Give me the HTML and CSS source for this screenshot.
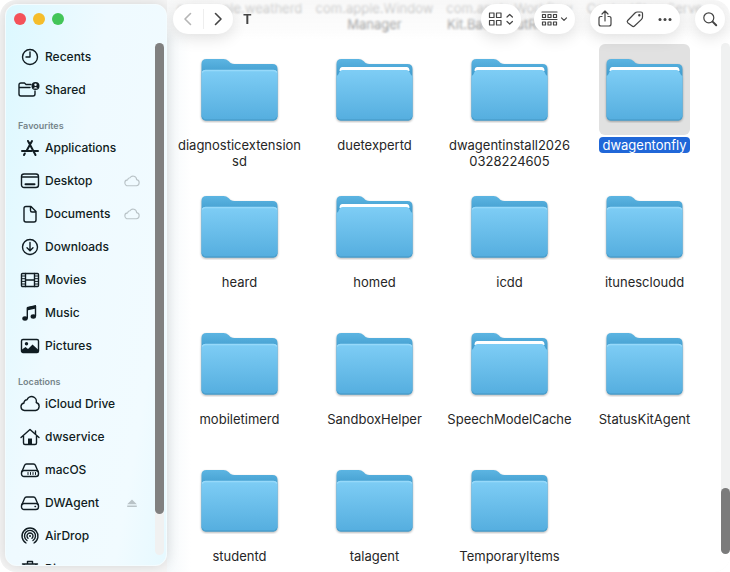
FILE: index.html
```
<!DOCTYPE html>
<html lang="en-GB">
<head>
<meta charset="utf-8">
<title>T</title>
<link rel="stylesheet" href="styles.css">
</head>
<body>
<svg class="defs" aria-hidden="true">
  <defs>
    <linearGradient id="back" x1="0" y1="0" x2="0" y2="1"><stop offset="0" stop-color="#5cb5e2"/><stop offset=".25" stop-color="#449fd0"/><stop offset="1" stop-color="#449fd0"/></linearGradient>
    <linearGradient id="front" x1="0" y1="0" x2="0" y2="1"><stop offset="0" stop-color="#7ecdf5"/><stop offset="1" stop-color="#55aedf"/></linearGradient>
    <symbol id="folder" viewBox="0 0 80 66">
      <path d="M2 7q0-5 5-5h17q3 0 5 2l2 2q2 1 4 1h38q5 0 5 5v48H2z" fill="url(#back)"/>
      <path d="M2 17q0-4 4-4h68q4 0 4 4v42q0 4-4 4H6q-4 0-4-4z" fill="url(#front)"/>
      <path d="M3 15q1-1.500 3-1.500h68q2 0 3 1.500" fill="none" stroke="#96d9fa"/>
      <path d="M3 61q1 2 3 2h68q2 0 3-2" fill="none" stroke="#4a9fcd"/>
    </symbol>
    <symbol id="folder-full" viewBox="0 0 80 66">
      <path d="M2 7q0-5 5-5h17q3 0 5 2l2 2q2 1 4 1h38q5 0 5 5v48H2z" fill="url(#back)"/>
      <path d="M5 14q0-4 3-4h64q3 0 3 4z" fill="#fff"/>
      <path d="M2 19q2-1 3-4 1-2 3-2h64q2 0 3 2 1 3 3 4v40q0 4-4 4H6q-4 0-4-4z" fill="url(#front)"/>
      <path d="M3 61q1 2 3 2h68q2 0 3-2" fill="none" stroke="#4a9fcd"/>
    </symbol>
    <symbol id="cloud" viewBox="0 0 20 20"><path d="M5 16a3.700 3.700 0 0 1-.5-7.400A3 3 0 0 1 7.500 6a4.500 4.500 0 0 1 8.300 2.300A3.900 3.900 0 0 1 15.500 16z"/></symbol>
  </defs>
</svg>
<div class="window">
  <aside class="sidebar">
    <div class="lights"><button class="light close" aria-label="Close"></button><button class="light minimise" aria-label="Minimise"></button><button class="light zoom" aria-label="Zoom"></button></div>
    <nav class="places">
      <ul>
        <li><a href="#"><svg viewBox="0 0 20 20"><circle cx="10" cy="10" r="7.500"/><path d="M10 5v5H6"/></svg><span>Recents</span></a></li>
        <li><a href="#"><svg class="wide" viewBox="0 0 22 20"><path d="M13 4.500H8L6.500 3H3Q1 3 1 5v9q0 2 2 2h12q2 0 2-2v-3M1 7.500H12"/><circle cx="17.500" cy="6" r="4" class="solid"/><circle cx="17.500" cy="4.800" r="1.200" class="light-fill"/><path d="M15.300 8.500q2.200-3 4.400 0z" class="light-fill"/></svg><span>Shared</span></a></li>
      </ul>
      <h2>Favourites</h2>
      <ul>
        <li><a href="#"><svg viewBox="0 0 20 20"><path class="thick" d="M8 3l7.500 14M12 3L9.500 7.500 6.500 13M2 13h9.500M14.500 13H18M4.800 15.500L4 17"/></svg><span>Applications</span></a></li>
        <li><a href="#"><svg viewBox="0 0 20 20"><rect x="1.500" y="3" width="17" height="13.500" rx="2.500"/><path d="M2 6h16"/><path class="thick" d="M5.500 13.300h9"/></svg><span>Desktop</span><svg class="status" viewBox="0 0 20 20"><use href="#cloud"/></svg></a></li>
        <li><a href="#"><svg viewBox="0 0 20 20"><path d="M6 2.500h5l5 5V16q0 2-2 2H6q-2 0-2-2V4.500q0-2 2-2zM10.500 3v3.500q0 1.500 1.500 1.500h4"/></svg><span>Documents</span><svg class="status" viewBox="0 0 20 20"><use href="#cloud"/></svg></a></li>
        <li><a href="#"><svg viewBox="0 0 20 20"><circle cx="10" cy="10" r="7.500"/><path d="M10 5.500v8M7 10.800l3 3 3-3"/></svg><span>Downloads</span></a></li>
        <li><a href="#"><svg viewBox="0 0 20 20"><rect x="1.500" y="3.500" width="17" height="13" rx="1"/><path d="M5.500 3.500v13M14.500 3.500v13M5.500 10h9"/><path class="fine" d="M2 6h3M2 8.700h3M2 11.400h3M2 14h3M15 6h3M15 8.700h3M15 11.400h3M15 14h3"/></svg><span>Movies</span></a></li>
        <li><a href="#"><svg viewBox="0 0 20 20"><path d="M7.300 15V5l8.200-1.800V13"/><path class="solid" d="M7 4l9-2v3.500l-9 2z"/><ellipse class="solid" cx="5" cy="15.500" rx="2.700" ry="2.200"/><ellipse class="solid" cx="13.300" cy="13.500" rx="2.700" ry="2.200"/></svg><span>Music</span></a></li>
        <li><a href="#"><svg viewBox="0 0 20 20"><rect x="1.500" y="3.500" width="17" height="13" rx="1.500"/><circle class="solid" cx="6.500" cy="7.800" r="1.700"/><path class="solid" d="M2 13.500l3.500-2.500 2.500 2 4.500-4.500 5.500 5v3H2z"/></svg><span>Pictures</span></a></li>
      </ul>
      <h2>Locations</h2>
      <ul>
        <li><a href="#"><svg viewBox="0 0 20 20"><path d="M4.500 16.500a3.800 3.800 0 0 1-.5-7.500 3 3 0 0 1 3-3.200 4.800 4.800 0 0 1 9.200 2.700A4.100 4.100 0 0 1 15.500 16.500z"/></svg><span>iCloud Drive</span></a></li>
        <li><a href="#"><svg viewBox="0 0 20 20"><path d="M1 10.500L10 2.500l9 8M15.500 7V4M3.500 9v7q0 1.500 1.500 1.500h10q1.500 0 1.500-1.500V9"/><path class="solid" d="M8 11.500h4v6H8z"/></svg><span>dwservice</span></a></li>
        <li><a href="#"><svg viewBox="0 0 20 20"><path d="M2 11.500l2.500-6q.6-1.500 2-1.500h7q1.400 0 2 1.500l2.500 6"/><rect x="1.500" y="10.500" width="17" height="6" rx="2.500"/><path class="fine" d="M8 12.500v2M10.500 12.500v2M13 12.500v2M15.500 12.500v2"/></svg><span>macOS</span></a></li>
        <li><a href="#"><svg viewBox="0 0 20 20"><path d="M2 11.500l2.500-6q.6-1.500 2-1.500h7q1.400 0 2 1.500l2.500 6"/><rect x="1.500" y="10.500" width="17" height="6" rx="2.500"/><path d="M15 13.500h.5"/></svg><span>DWAgent</span><svg class="status eject" viewBox="0 0 20 20"><path d="M10 5.500l6 6H4zM4 13h12v2H4z"/></svg></a></li>
        <li><a href="#"><svg viewBox="0 0 20 20"><path d="M6 17a8 8 0 1 1 8 0M7 14.500a5.500 5.500 0 1 1 6 0M8 12.200a3 3 0 1 1 4 0"/><circle class="solid" cx="10" cy="10" r="1"/></svg><span>AirDrop</span></a></li>
        <li><a href="#"><svg viewBox="0 0 20 20"><path d="M2.500 5h15M4 5l1 13h10l1-13M7.500 5V2.500h5V5M8 7v9M12 7v9M5 9h10"/></svg><span>Bin</span></a></li>
      </ul>
    </nav>
    <div class="scroll-track side-track"><div class="scroll-thumb"></div></div>
  </aside>
  <main class="content">
    <header class="toolbar">
      <div class="pill history"><button aria-label="Back" disabled><svg viewBox="0 0 20 20"><path d="M12.500 4.500L7 10l5.500 5.500"/></svg></button><button aria-label="Forward"><svg viewBox="0 0 20 20"><path d="M7.500 4.500L13 10l-5.500 5.500"/></svg></button></div>
      <h1>T</h1>
      <button class="pill view" aria-label="View as icons"><svg viewBox="0 0 28 20"><path d="M2.500 4h4.500v4.500H2.500zM9.500 4h4.500v4.500H9.500zM2.500 11.500h4.500V16H2.500zM9.500 11.500h4.500V16H9.500zM20 8l2.700-2.500L25.400 8M20 12.500l2.700 2.500 2.700-2.500"/></svg></button>
      <button class="pill group" aria-label="Group items"><svg viewBox="0 0 28 20"><path d="M1 3h15M1 10.500h15M1.500 5.500h3v3h-3zM7 5.500h3v3H7zM12.500 5.500h3v3h-3zM1.500 13h3v3h-3zM7 13h3v3H7zM12.500 13h3v3h-3zM20.500 8.800l2.500 2.500 2.500-2.500"/></svg></button>
      <div class="pill actions">
        <button aria-label="Share"><svg viewBox="0 0 20 20"><path d="M7 7.500H6q-2 0-2 2V15q0 2 2 2h8q2 0 2-2V9.500q0-2-2-2h-1M10 12V2.500M7 5l3-3 3 3"/></svg></button>
        <button aria-label="Edit tags"><svg viewBox="0 0 20 20"><path d="M2.700 11.500L10 4q1-1 2.500-1H16q1.500 0 1.500 1.500V8q0 1.300-1 2.300l-7 6.700q-1.200 1.200-2.400 0l-4.400-3.300q-1-1 0-2.200z"/><circle cx="14.300" cy="6.200" r=".6"/></svg></button>
        <button aria-label="More"><svg viewBox="0 0 20 20"><g class="solid"><circle cx="5" cy="10.500" r="1.500"/><circle cx="10" cy="10.500" r="1.500"/><circle cx="15" cy="10.500" r="1.500"/></g></svg></button>
      </div>
      <button class="pill search" aria-label="Search"><svg viewBox="0 0 20 20"><circle cx="8.800" cy="8.800" r="5"/><path class="thick" d="M12.600 12.600l3.600 3.600"/></svg></button>
    </header>
    <ul class="files">
      <li><svg><use href="#folder"/></svg><span>com.apple.weatherd</span></li>
      <li><svg><use href="#folder"/></svg><span>com.apple.Window<br>Manager</span></li>
      <li><svg><use href="#folder"/></svg><span>com.apple.Workflow<br>Kit.Backg…utRunner</span></li>
      <li><svg><use href="#folder"/></svg><span>ContextStoreServe<br>r</span></li>
      <li><svg><use href="#folder"/></svg><span>diagnosticextension<br>sd</span></li>
      <li><svg><use href="#folder-full"/></svg><span>duetexpertd</span></li>
      <li><svg><use href="#folder-full"/></svg><span>dwagentinstall2026<br>0328224605</span></li>
      <li class="selected"><svg><use href="#folder-full"/></svg><span>dwagentonfly</span></li>
      <li><svg><use href="#folder"/></svg><span>heard</span></li>
      <li><svg><use href="#folder-full"/></svg><span>homed</span></li>
      <li><svg><use href="#folder"/></svg><span>icdd</span></li>
      <li><svg><use href="#folder"/></svg><span>itunescloudd</span></li>
      <li><svg><use href="#folder"/></svg><span>mobiletimerd</span></li>
      <li><svg><use href="#folder"/></svg><span>SandboxHelper</span></li>
      <li><svg><use href="#folder-full"/></svg><span>SpeechModelCache</span></li>
      <li><svg><use href="#folder"/></svg><span>StatusKitAgent</span></li>
      <li><svg><use href="#folder"/></svg><span>studentd</span></li>
      <li><svg><use href="#folder"/></svg><span>talagent</span></li>
      <li><svg><use href="#folder"/></svg><span>TemporaryItems</span></li>
    </ul>
    <div class="scroll-track main-track"><div class="scroll-thumb"></div></div>
  </main>
</div>
</body>
</html>
```
FILE: styles.css
```
* { box-sizing: border-box; }
body { margin: 0; font-family: Inter, "Liberation Sans", sans-serif; font-size: 13px; line-height: 16px; color: #262626; background: #fff; }
ul { list-style: none; margin: 0; padding: 0; }
button { border: 0; padding: 0; background: none; color: inherit; font: inherit; }
svg { fill: none; stroke: currentColor; stroke-width: 1.4; stroke-linecap: round; stroke-linejoin: round; }
.defs { position: absolute; width: 0; height: 0; }
.thick { stroke-width: 2; }
.fine { stroke-width: 1; }
.solid { fill: currentColor; stroke: none; }
.light-fill { fill: #effaff; stroke: none; }

.window { display: flex; height: 100vh; overflow: hidden; background: #f6f6f6; border-radius: 16px; }

.sidebar { position: relative; z-index: 1; display: flex; flex-direction: column; flex: 0 0 162px; margin: 4px 0 6px 5px; overflow: hidden; border: 1px solid #f3fcff; border-radius: 12px; background: linear-gradient(100deg, #dcf8ff 0%, #effaff 40%, #f1fbff 80%, #e6f9ff 100%); box-shadow: 0 0 14px rgba(0, 0, 0, .14); }
.lights { display: flex; gap: 7px; padding: 8px 8px 15px; }
.light { width: 12px; height: 12px; border-radius: 50%; }
.close { background: #f4525a; }
.minimise { background: #f5bd2b; }
.zoom { background: #43c558; }
.places { display: flex; flex-direction: column; padding: 0 22px 0 12px; font-size: 12px; color: #101c22; }
.places a { display: flex; align-items: center; gap: 5px; height: 33px; color: inherit; text-decoration: none; }
.places a svg { flex: none; width: 20px; height: 20px; margin-left: 2px; }
.places a .wide { width: 22px; margin-left: 0; }
.places a span { flex: 1; white-space: nowrap; font-weight: 450; }
.places a .status { width: 16px; height: 16px; color: #b9c3c7; margin-right: 4px; }
.places a .eject { fill: currentColor; stroke: none; }
.places h2 { margin: 0; padding-top: 12px; height: 25px; font-size: 9px; line-height: 16px; font-weight: 600; color: #76858b; }

.scroll-track { position: absolute; border-radius: 5px; background: #f0f1f1; }
.scroll-thumb { border-radius: 5px; background: #808080; }
.side-track { top: 38px; right: 2px; bottom: 10px; width: 9px; }
.side-track .scroll-thumb { height: 92%; }
.main-track { top: 43px; right: 0; bottom: 18px; width: 9px; display: flex; flex-direction: column; justify-content: flex-end; }
.main-track .scroll-thumb { height: 13%; background: #7b7b7b; }

.content { position: relative; flex: 1; min-width: 0; overflow: hidden; background: linear-gradient(90deg, #f5f9fb, #fff 24px); }
.toolbar { position: absolute; inset: 0 0 auto; z-index: 1; display: flex; align-items: flex-start; padding: 4px 5px 6px 6px; color: #444; background: linear-gradient(rgba(247, 247, 247, .9), rgba(250, 250, 250, .55) 70%, rgba(255, 255, 255, 0)); backdrop-filter: blur(1px); }
.pill { display: flex; align-items: center; justify-content: center; height: 30px; border-radius: 15px; background: #fff; box-shadow: 0 4px 16px rgba(0, 0, 0, .12); }
.pill svg { display: block; width: 20px; height: 20px; stroke-width: 1.2; }
.history { width: 60px; }
.history button { flex: 1; display: flex; justify-content: center; }
.history button + button { border-left: 1px solid #eee; }
.history svg { stroke-width: 1.6; }
.history button:disabled { color: #b5b5b5; }
.toolbar h1 { flex: 1; margin: 0 0 0 10px; font-size: 13px; line-height: 30px; font-weight: 700; }
.view { width: 40px; margin-right: 13px; }
.group { width: 41px; margin-right: 15px; }
.view svg, .group svg { width: 28px; }
.actions { width: 90px; gap: 10px; margin-right: 15px; }
.search { width: 30px; }

.files { display: grid; grid-template-columns: repeat(4, 1fr); grid-auto-rows: 137px; margin: -93px 18px 0 5px; }
.files li { display: flex; flex-direction: column; align-items: center; gap: 2px; text-align: center; }
.files svg { width: 91px; height: 91px; padding: 13px 5px 12px; border-radius: 6px; stroke: none; }
.files use { filter: drop-shadow(0 1px 1px rgba(0, 0, 0, .3)); }
.files span { padding: 0 3px; border-radius: 4px; white-space: nowrap; }
.files .selected svg { background: #e1e1e1; }
.files .selected span { background: #2067d8; color: #fff; }
```
